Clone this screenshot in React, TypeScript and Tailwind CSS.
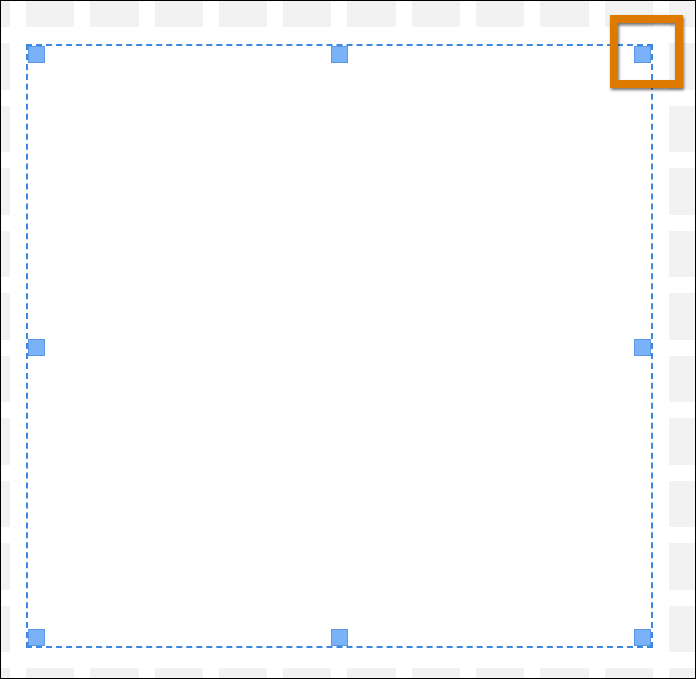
import React from 'react';

const ROWS = 12;
const COLS = 12;

const Handle: React.FC = () => (
  <div className="shrink-0 w-[17px] h-[17px] bg-[#7ab2f9] border border-[#5b97e4]" />
);

export default function App() {
  return (
    <div className="relative w-[696px] h-[679px] overflow-hidden border border-black bg-white">
      {/* background tiles */}
      <div className="flex flex-col gap-y-[16px] -mt-[20.5px] -ml-[39.3px]">
        {Array.from({ length: ROWS }).map((_, r) => (
          <div key={r} className="flex gap-x-[16px]">
            {Array.from({ length: COLS }).map((_, c) => (
              <div key={c} className="shrink-0 w-[48.3px] h-[46.5px] bg-[#f2f2f2]" />
            ))}
          </div>
        ))}
      </div>

      {/* selection frame */}
      <div className="absolute left-[25px] top-[43px] w-[627px] h-[604px] flex flex-col justify-between bg-white border-2 border-dashed border-[#3a88e2] shadow-[0_0_0_5px_#ffffff]">
        <div className="flex justify-between">
          <Handle />
          <Handle />
          <Handle />
        </div>
        <div className="flex justify-between mt-[3px]">
          <Handle />
          <Handle />
        </div>
        <div className="flex justify-between">
          <Handle />
          <Handle />
          <Handle />
        </div>
      </div>

      {/* focus marker */}
      <div className="absolute left-[609px] top-[14px] w-[73px] h-[73px] border-[8px] border-[#df7a00] drop-shadow-[1px_2px_1.5px_rgba(0,0,0,0.55)]" />
    </div>
  );
}
